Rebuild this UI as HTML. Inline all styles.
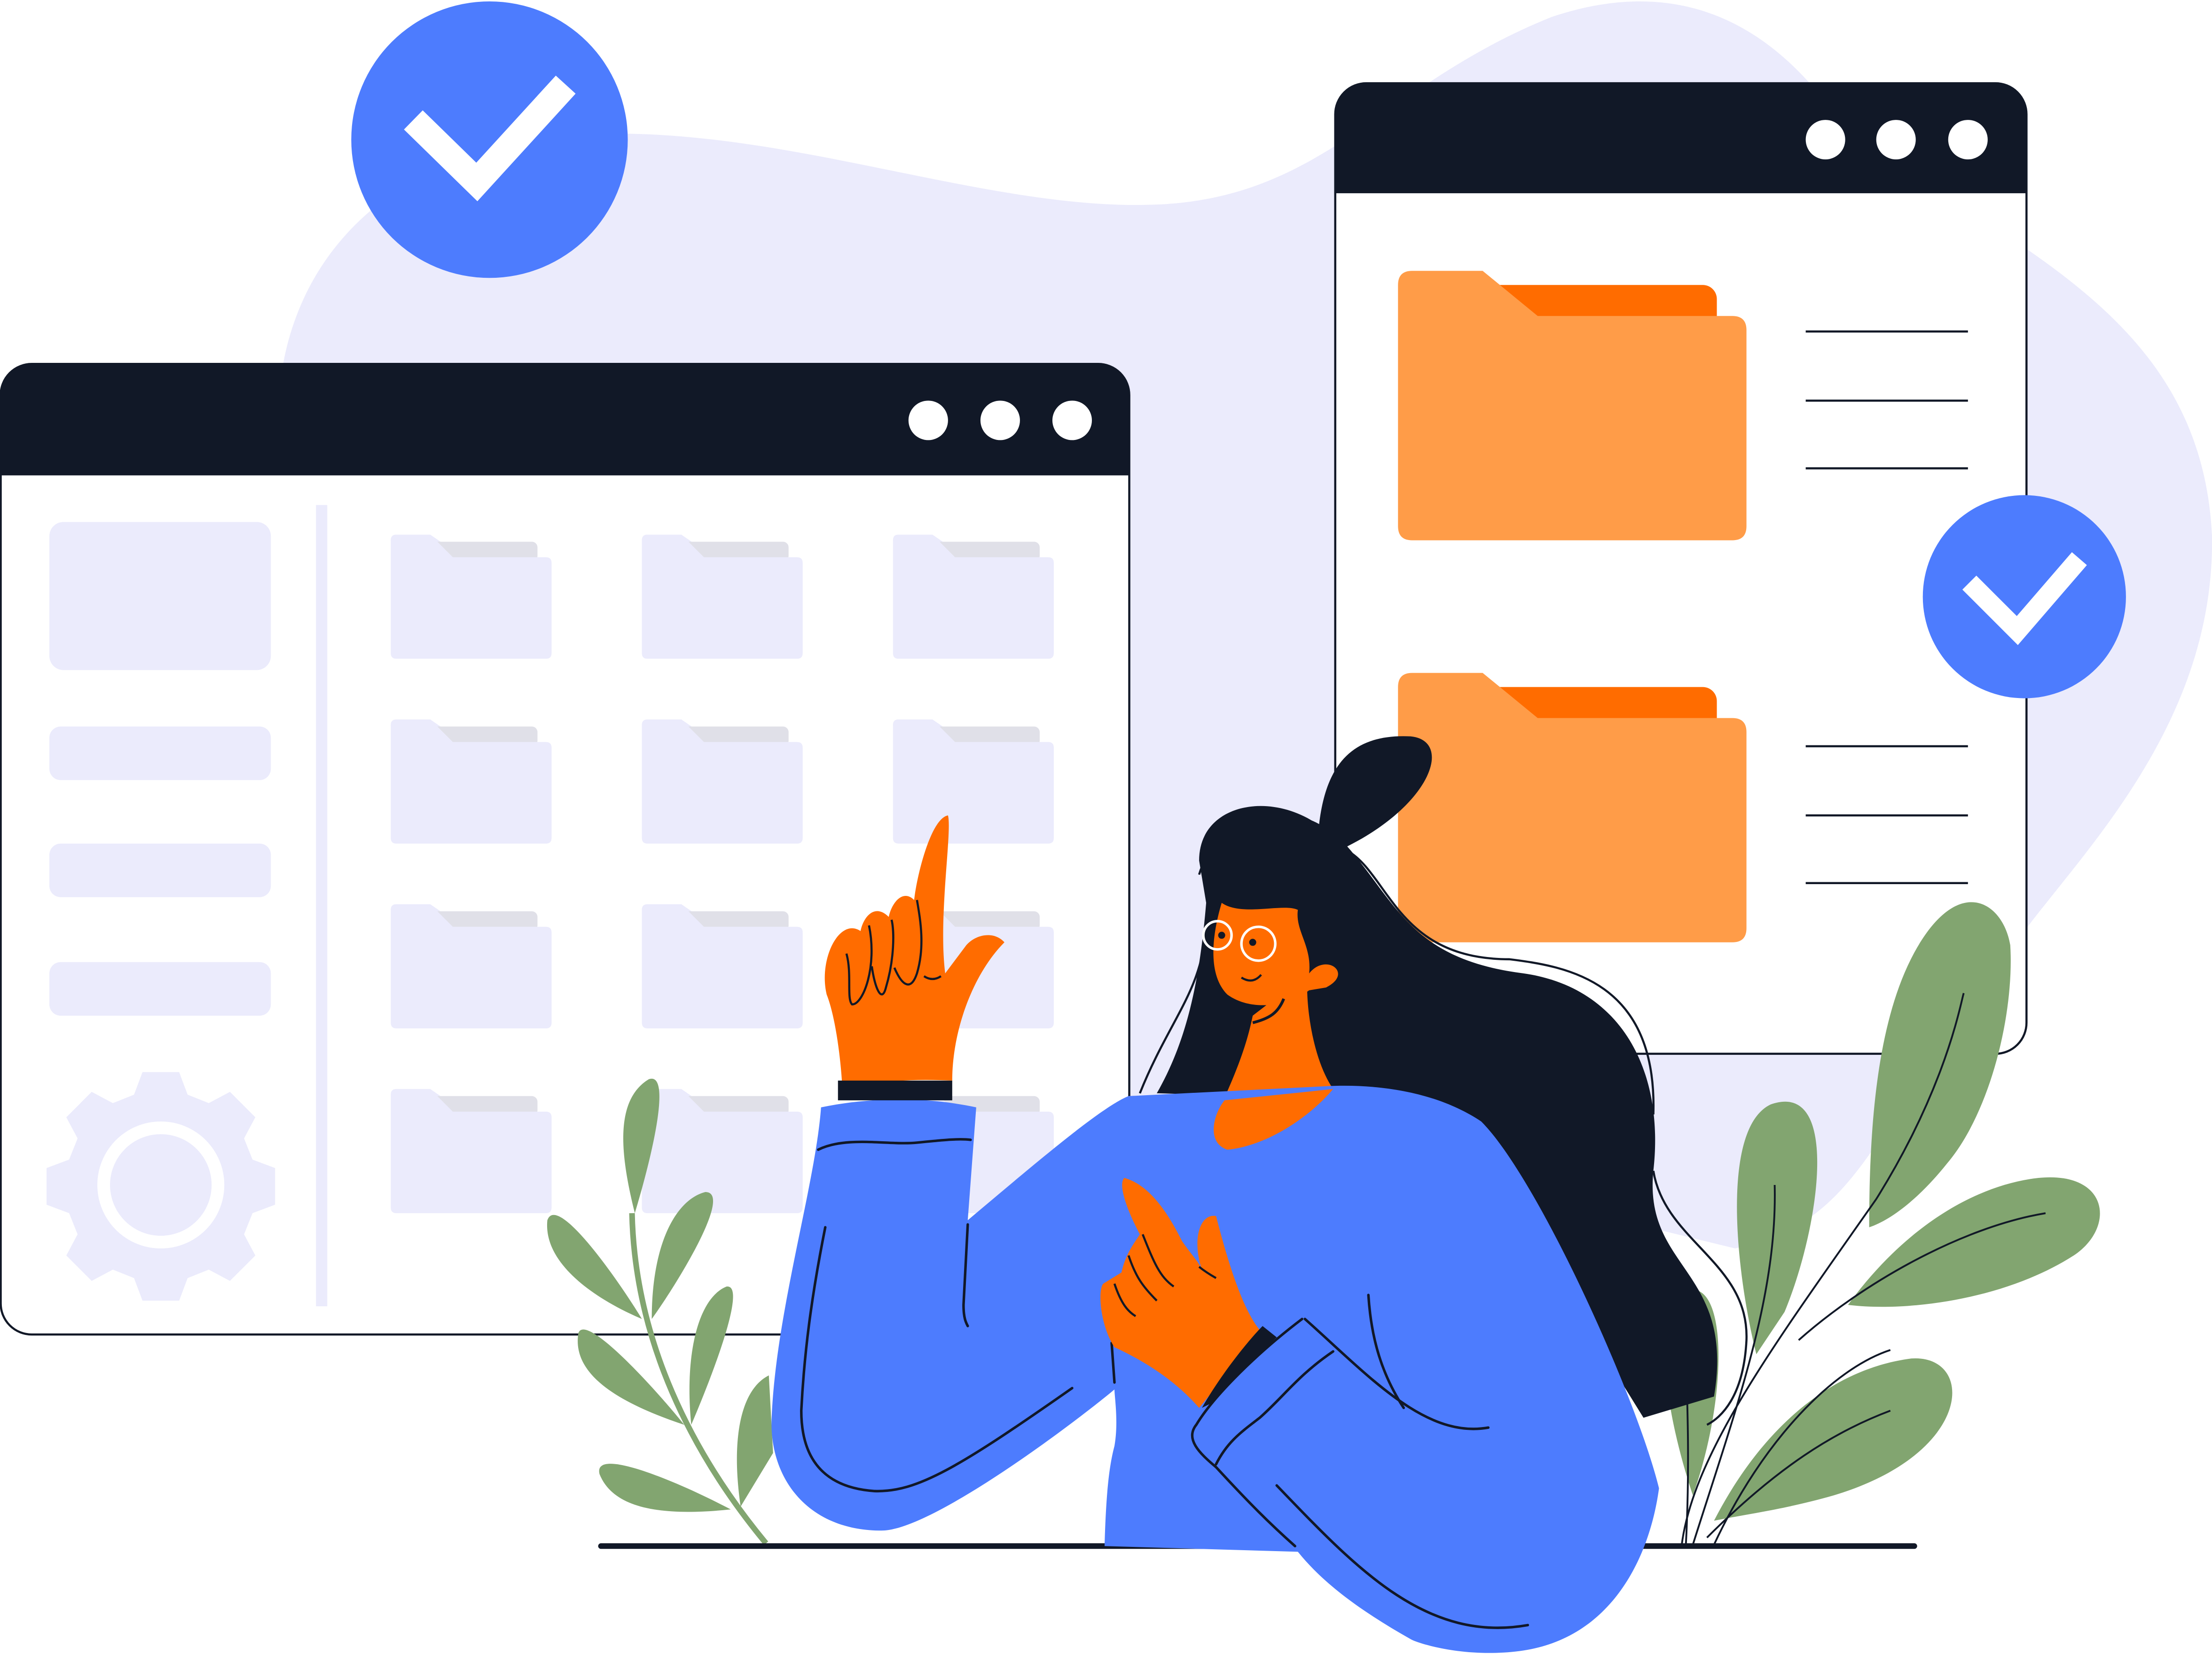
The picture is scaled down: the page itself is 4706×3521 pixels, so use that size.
<!DOCTYPE html>
<html><head><meta charset="utf-8"><style>
html,body{margin:0;padding:0;background:#fff;width:4706px;height:3521px;overflow:hidden}
svg{display:block}
</style></head><body>
<svg width="4706" height="3521" viewBox="0 0 1568 1173.2" preserveAspectRatio="none" xmlns="http://www.w3.org/2000/svg">
<defs>
<g id="f">
<path d="M0,4 q0,-4 4,-4 h24 l16,11 h-40z" fill="#ebebfc"/>
<rect x="28" y="5" width="76" height="14" rx="4" fill="#e0e0e8"/>
<path d="M4,0 h24 l16,16 h66 q4,0 4,4 v64 q0,4 -4,4 h-106 q-4,0 -4,-4 v-80 q0,-4 4,-4z" fill="#ebebfc"/>
</g>
<g id="of">
<rect x="60" y="10" width="168" height="40" rx="10" fill="#ff6c00"/>
<path d="M12,0 h50 l39,32 h138 q10,0 10,10 v139 q0,10 -10,10 h-227 q-10,0 -10,-10 v-171 q0,-10 10,-10z" fill="#ff9c48"/>
</g>
</defs>
<path d="M200,262 C215,170 290,100 420,95 C560,90 700,150 820,145 C940,140 980,60 1100,12 C1210,-25 1270,40 1300,80 C1400,170 1560,210 1568,380 C1570,510 1480,600 1435,660 L1380,730 C1320,830 1300,870 1230,885 L800,780 L200,262z" fill="#ebebfc"/>
<circle cx="347" cy="99" r="98" fill="#4d7cfe"/>
<polyline points="293,85 338,129 401,60" fill="none" stroke="#fff" stroke-width="19"/>
<rect x="0.5" y="258" width="800" height="688" rx="22" fill="#fff" stroke="#111827" stroke-width="1.5"/>
<path d="M22,258 h756 a22,22 0 0 1 22,22 v57 h-800 v-57 a22,22 0 0 1 22,-22z" fill="#111827"/>
<circle cx="658" cy="298" r="14" fill="#fff"/><circle cx="709" cy="298" r="14" fill="#fff"/><circle cx="760" cy="298" r="14" fill="#fff"/>
<rect x="35" y="370" width="157" height="105" rx="10" fill="#ebebfc"/>
<rect x="35" y="515" width="157" height="38" rx="8" fill="#ebebfc"/>
<rect x="35" y="598" width="157" height="38" rx="8" fill="#ebebfc"/>
<rect x="35" y="682" width="157" height="38" rx="8" fill="#ebebfc"/>
<rect x="224" y="358" width="8" height="568" fill="#ebebfc"/>
<g transform="translate(114,840)" fill="#ebebfc">
<path d="M-13,-80 h26 l6,16 l15,6 l15,-8 l18,18 l-8,15 l6,15 l16,6 v26 l-16,6 l-6,15 l8,15 l-18,18 l-15,-8 l-15,6 l-6,16 h-26 l-6,-16 l-15,-6 l-15,8 l-18,-18 l8,-15 l-6,-15 l-16,-6 v-26 l16,-6 l6,-15 l-8,-15 l18,-18 l15,8 l15,-6z"/>
<circle r="45" fill="#fff"/><circle r="36" fill="#ebebfc"/>
</g>
<use href="#f" x="277" y="379"/><use href="#f" x="455" y="379"/><use href="#f" x="633" y="379"/>
<use href="#f" x="277" y="510"/><use href="#f" x="455" y="510"/><use href="#f" x="633" y="510"/>
<use href="#f" x="277" y="641"/><use href="#f" x="455" y="641"/><use href="#f" x="633" y="641"/>
<use href="#f" x="277" y="772"/><use href="#f" x="455" y="772"/><use href="#f" x="633" y="772"/>
<rect x="946.5" y="59" width="490" height="688" rx="22" fill="#fff" stroke="#111827" stroke-width="1.5"/>
<path d="M968,59 h446 a22,22 0 0 1 22,22 v56 h-490 v-56 a22,22 0 0 1 22,-22z" fill="#111827"/>
<circle cx="1294" cy="99" r="14" fill="#fff"/><circle cx="1344" cy="99" r="14" fill="#fff"/><circle cx="1395" cy="99" r="14" fill="#fff"/>
<use href="#of" x="989" y="192"/>
<use href="#of" x="989" y="477"/>
<g stroke="#111827" stroke-width="1.5">
<line x1="1280" y1="235" x2="1395" y2="235"/><line x1="1280" y1="284" x2="1395" y2="284"/><line x1="1280" y1="332" x2="1395" y2="332"/>
<line x1="1280" y1="529" x2="1395" y2="529"/><line x1="1280" y1="578" x2="1395" y2="578"/><line x1="1280" y1="626" x2="1395" y2="626"/>
</g>
<circle cx="1435" cy="423" r="72" fill="#4d7cfe"/>
<polyline points="1396,413 1430,447 1474,396" fill="none" stroke="#fff" stroke-width="14"/>
<g fill="#82a570">
<path d="M1325,870 C1325,800 1330,720 1360,670 C1390,620 1420,640 1425,670 C1428,720 1410,790 1380,825 C1360,850 1340,865 1325,870z"/>
<path d="M1310,925 C1350,870 1400,840 1445,835 C1495,830 1500,870 1470,890 C1420,922 1350,930 1310,925z"/>
<path d="M1245,960 C1230,900 1220,800 1255,783 C1305,765 1290,870 1265,930z"/>
<path d="M1200,1060 C1180,1000 1170,930 1195,915 C1225,905 1225,990 1200,1060z"/>
<path d="M1215,1078 C1250,1010 1300,970 1355,963 C1400,960 1400,1030 1300,1060 C1265,1070 1240,1073 1215,1078z"/>
<path d="M450,860 C440,820 435,780 460,765 C475,760 465,810 450,860z"/>
<path d="M462,935 C462,880 480,850 500,845 C520,845 480,910 462,935z"/>
<path d="M455,935 C420,920 385,895 388,865 C395,845 440,910 455,935z"/>
<path d="M490,1010 C485,960 495,920 515,912 C530,910 505,975 490,1010z"/>
<path d="M485,1010 C440,995 405,975 410,945 C415,930 465,985 485,1010z"/>
<path d="M525,1068 C518,1020 525,985 545,975 L548,1030z"/>
<path d="M518,1070 C470,1075 435,1070 425,1045 C420,1025 480,1050 518,1070z"/>
</g>
<g fill="none" stroke="#111827" stroke-width="1.3">
<path d="M1192,1096 C1200,1030 1260,950 1330,850 C1380,770 1390,710 1392,704"/>
<path d="M1215,1095 C1250,1020 1300,970 1340,957 M1200,1095 C1230,1000 1260,920 1258,840 M1195,1096 C1198,1040 1196,990 1195,962 M1275,950 C1320,910 1390,870 1450,860 M1210,1090 C1260,1040 1300,1015 1340,1000"/>
</g>
<g fill="none" stroke="#82a570" stroke-width="4">
<path d="M543,1094 C490,1030 450,950 448,860"/>
</g>
<line x1="426" y1="1096" x2="1357" y2="1096" stroke="#111827" stroke-width="4" stroke-linecap="round"/>
<path d="M850,610 C850,570 900,560 935,585 C940,540 960,520 1000,522 C1030,525 1015,570 955,600 C990,640 1000,680 1080,690 C1150,700 1180,760 1172,830 C1165,900 1230,900 1215,990 L1165,1005 L1100,900 L1000,780 L820,775 C840,740 850,700 855,640z" fill="#111827"/>
<path d="M935,585 C910,570 860,585 850,620 M955,603 C985,620 990,680 1070,680 C1110,685 1175,695 1172,790 M1172,830 C1180,880 1240,895 1238,950 C1236,990 1220,1005 1210,1010" fill="none" stroke="#111827" stroke-width="1.5"/>
<path d="M855,650 C855,700 830,720 808,775" fill="none" stroke="#111827" stroke-width="1.5"/>
<path d="M888,720 C880,760 860,790 858,805 C860,825 900,815 945,772 C930,750 925,710 927,690z" fill="#ff6c00"/>
<path d="M866,640 C880,650 910,640 920,645 C918,660 930,670 928,690 C940,675 960,690 940,700 L928,702 C910,715 885,716 870,705 C855,690 860,660 866,640z" fill="#ff6c00"/>
<path d="M888,725 C900,722 906,718 910,708" fill="none" stroke="#111827" stroke-width="2"/>
<circle cx="863" cy="663" r="10" fill="none" stroke="#fff" stroke-width="1.8"/>
<circle cx="892" cy="669" r="12" fill="none" stroke="#fff" stroke-width="1.8"/>
<circle cx="866" cy="663" r="2.5" fill="#111827"/><circle cx="888" cy="668" r="2.5" fill="#111827"/>
<path d="M880,693 q8,5 14,-2" fill="none" stroke="#111827" stroke-width="1.5"/>
<path d="M800,777 L940,770 C980,768 1020,775 1050,795 C1090,835 1160,990 1176,1055 C1170,1100 1145,1160 1080,1170 C1040,1176 1005,1165 1000,1162 C970,1145 940,1125 920,1100 L783,1096 C784,1060 786,1040 790,1025 C793,1008 790,990 790,985 C760,1010 660,1085 625,1085 C570,1085 545,1045 547,1005 C550,930 578,840 582,785 C620,777 660,778 692,785 L686,865 C730,828 780,785 800,777z" fill="#4d7cfe"/>
<path d="M868,780 C860,790 855,810 870,815 C900,812 930,790 945,772" fill="#ff6c00"/>
<g fill="none" stroke="#111827" stroke-width="1.8" stroke-linecap="round">
<path d="M580,815 C600,805 630,812 650,810 C670,808 680,807 688,808"/>
<path d="M585,870 C575,920 570,960 568,1000 C568,1040 590,1055 620,1057 C650,1058 680,1040 760,984"/>
<path d="M686,868 L683,925 C683,935 685,938 686,940"/>
<path d="M788,952 L790,980"/>
<path d="M925,935 C970,975 1010,1020 1055,1012"/>
<path d="M970,918 C972,950 980,975 995,998"/>
<path d="M923,935 C890,960 860,990 848,1010 C840,1020 850,1030 862,1040 C885,1065 900,1080 918,1096"/>
<path d="M945,958 C920,975 910,990 893,1005 C880,1015 870,1022 862,1038"/>
<path d="M905,1053 C960,1110 1010,1165 1083,1152"/>
</g>
<path d="M595,775 C620,765 650,765 675,766 C675,730 690,690 712,668 C705,660 692,662 685,670 L670,690 C665,650 675,590 672,578 C660,580 650,620 648,638 C640,630 632,640 630,650 C620,640 612,650 610,660 C595,650 580,680 586,705 C592,720 596,750 597,770z" fill="#ff6c00"/>
<rect x="594" y="766" width="81" height="14" fill="#111827"/>
<path d="M600,676 C604,690 600,708 604,712 C612,712 622,685 616,656 M618,685 C620,700 625,712 628,700 C634,680 634,660 632,652 M634,686 C640,700 646,702 650,690 C656,670 652,650 650,638 M655,692 q6,4 12,0" fill="none" stroke="#111827" stroke-width="1.5"/>
<path d="M850,998 C830,975 805,962 790,955 C780,940 778,915 782,910 L795,902 C798,888 805,880 808,875 C800,860 792,840 797,835 C815,840 828,860 838,880 C845,890 850,895 852,900 C845,880 850,860 862,862 C868,885 880,930 895,945 C880,960 865,980 850,998z" fill="#ff6c00"/>
<path d="M852,998 C865,975 885,950 895,940 L905,948 C890,962 870,982 858,995z" fill="#111827"/>
<path d="M790,910 C795,925 800,930 805,933 M800,890 C805,905 810,912 820,922 M810,875 C818,895 822,905 832,912 M850,898 q5,4 12,8" fill="none" stroke="#111827" stroke-width="1.5"/>
</svg>
</body></html>
